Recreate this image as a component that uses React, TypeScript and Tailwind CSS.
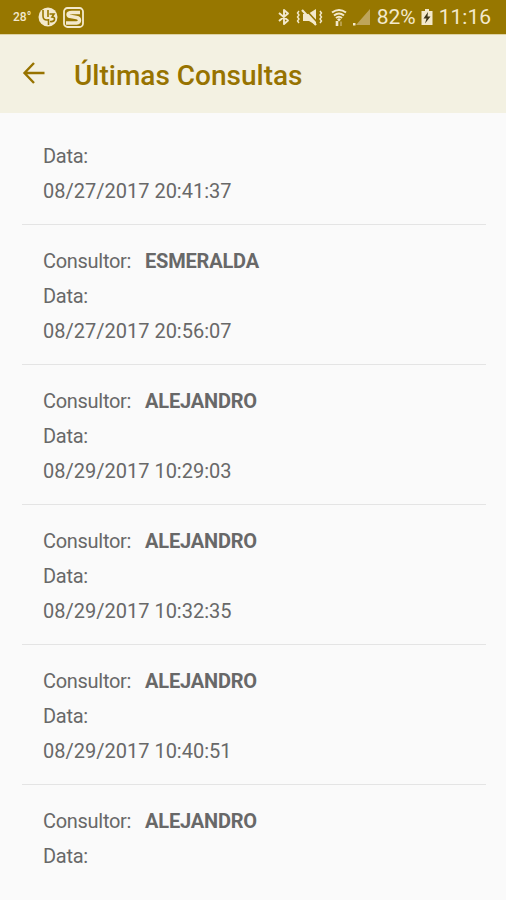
type Consulta = {
  consultor?: string;
  data?: string;
};

const consultas: Consulta[] = [
  { data: "08/27/2017 20:41:37" },
  { consultor: "ESMERALDA", data: "08/27/2017 20:56:07" },
  { consultor: "ALEJANDRO", data: "08/29/2017 10:29:03" },
  { consultor: "ALEJANDRO", data: "08/29/2017 10:32:35" },
  { consultor: "ALEJANDRO", data: "08/29/2017 10:40:51" },
  { consultor: "ALEJANDRO" },
];

function CallAppIcon() {
  return (
    <svg className="ml-[5px] h-5 w-5" viewBox="0 0 20 20" fill="none">
      <circle cx="10" cy="10" r="9.5" fill="#f3e9cc" />
      <path d="M5 3v6q0 4 4 4h1.500M10 3v7M10.500 12v6" stroke="#977700" strokeWidth="1.6" />
      <path
        d="M11.500 7h4.500l-2 3q3 0 2.500 2.500t-4.500 2"
        stroke="#977700"
        strokeWidth="1.6"
      />
    </svg>
  );
}

function SwarmIcon() {
  return (
    <svg className="ml-[5px] h-[21px] w-[21px]" viewBox="0 0 21 21" fill="none">
      <rect x="1" y="1" width="19" height="19" rx="3.5" stroke="#f3e9cc" strokeWidth="1.8" />
      <path
        d="M17 5.500H9Q5 5.500 5 7.500T8 9.500l5.500 1q3 .5 3 2.800t-3 2.700H3"
        stroke="#f3e9cc"
        strokeWidth="3.4"
      />
    </svg>
  );
}

function BluetoothIcon() {
  return (
    <svg className="h-[18px] w-3" viewBox="0 0 12 18" fill="none">
      <path
        d="M1 5l9 7.5L6 16V2l4 3.5L1 13"
        stroke="#f3e9cc"
        strokeWidth="1.9"
        strokeLinejoin="round"
      />
    </svg>
  );
}

function VibrateMuteIcon() {
  return (
    <svg className="ml-[6px] h-[18px] w-[27px]" viewBox="0 0 27 18" fill="none">
      <path
        d="M3 3L1.500 5l1.500 2-1.500 2L3 11l-1.500 2L3 15M24 3l1.500 2L24 7l1.500 2-1.500 2 1.500 2-1.500 2"
        stroke="#f3e9cc"
        strokeWidth="1.4"
      />
      <path d="M7 6h5l8-5v16l-7-4H7z" fill="#f3e9cc" />
      <path d="M10 2l12 13" stroke="#977700" strokeWidth="1.6" />
      <path d="M6 2l14 15" stroke="#f3e9cc" strokeWidth="2.2" />
    </svg>
  );
}

function WifiIcon() {
  return (
    <svg className="ml-[8px] h-[19px] w-4" viewBox="0 0 16 19" fill="none">
      <path
        d="M1 4.500q7-5 14 0M3 7.500q5-4 10 0M5 10q3-2.500 6 0"
        stroke="#f3e9cc"
        strokeWidth="2.1"
      />
      <path d="M6 11.500l2-1.500 2 1.500-2 2z" fill="#f3e9cc" />
      <path d="M6 13v5" stroke="#f3e9cc" strokeWidth="2.6" />
      <path d="M10 18v-4.500" stroke="#c5ad60" strokeWidth="1.5" />
    </svg>
  );
}

function SignalIcon() {
  return (
    <svg className="ml-[6px] h-[18px] w-[18px]" viewBox="0 0 18 18">
      <path d="M3 17L17 1v16z" fill="#bea55b" />
      <path d="M0 17.500V15h2.500v2.500z" fill="#f3e9cc" />
    </svg>
  );
}

function BatteryIcon() {
  return (
    <svg className="ml-[4px] h-[18px] w-3" viewBox="0 0 12 18">
      <path d="M4 1h4v2h3.500v14H.5V3H4z" fill="#f3e9cc" />
      <path d="M7 4L2.500 10.500h3L4 15.500l5.500-7H6.500z" fill="#3d3518" />
    </svg>
  );
}

function StatusBar() {
  return (
    <div className="flex h-[34px] items-center bg-[#977700] pr-[15px] pl-[13px] text-[#f3e9cc]">
      <span className="w-[20px] text-[12px] font-medium">28°</span>
      <CallAppIcon />
      <SwarmIcon />
      <div className="ml-auto flex items-center">
        <BluetoothIcon />
        <VibrateMuteIcon />
        <WifiIcon />
        <SignalIcon />
        <span className="ml-[6px] w-[40px] text-[21px] leading-none whitespace-nowrap">
          82%
        </span>
        <BatteryIcon />
        <span className="ml-[6px] text-[21px] leading-none">11:16</span>
      </div>
    </div>
  );
}

export default function App() {
  return (
    <div className="h-[900px] w-[506px] overflow-hidden bg-[#fafafa] font-['Roboto',sans-serif]">
      <StatusBar />

      <header className="flex h-[79px] items-center border-t border-[#ddd2a4] bg-[#f3f1e2] pl-[22px] text-[#977300]">
        <svg className="mb-[3px] h-6 w-6" viewBox="0 0 24 24" fill="none">
          <path d="M12 2L2.500 12l9.500 10M2.500 12h20" stroke="currentColor" strokeWidth="2.400" />
        </svg>
        <h1 className="mt-[4px] ml-[28px] text-[28px] font-medium">
          Últimas Consultas
        </h1>
      </header>

      <ul className="pr-5 pl-[22px] pt-[7px] text-[20px] leading-[35px] text-[#686868]">
        {consultas.map((c, i) => (
          <li
            key={i}
            className="border-b border-[#e4e4e4] px-[21px] pt-[19px] pb-[15px] last:border-b-0"
          >
            {c.consultor && (
              <p className="tracking-[-0.3px]">
                Consultor:
                <span className="ml-[14px] font-bold tracking-[-0.2px]">
                  {c.consultor}
                </span>
              </p>
            )}
            <p className="tracking-[-0.3px]">Data:</p>
            {c.data && <p>{c.data}</p>}
          </li>
        ))}
      </ul>
    </div>
  );
}
